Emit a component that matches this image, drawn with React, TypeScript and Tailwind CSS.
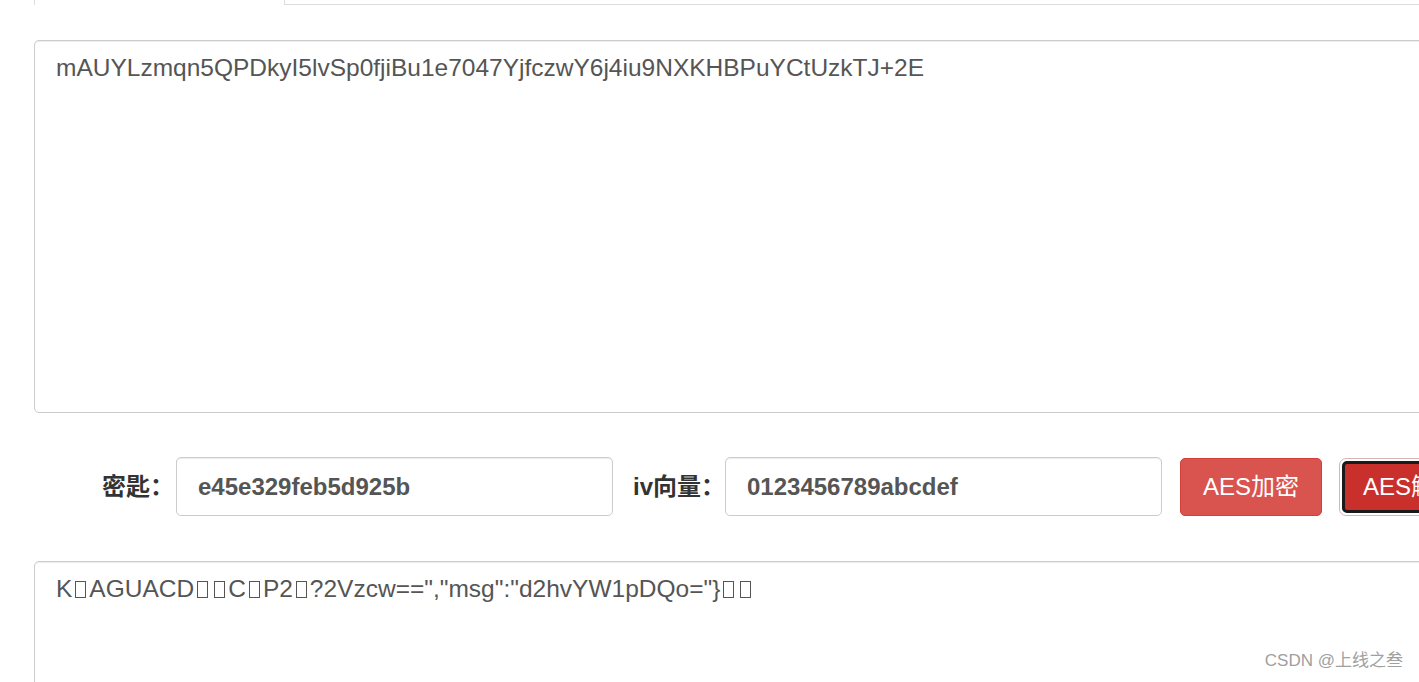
import React from "react";

const font = { fontFamily: '"Liberation Sans", Arial, "Noto Sans CJK SC", sans-serif' };

const cipherText = "mAUYLzmqn5QPDkyI5lvSp0fjiBu1e7047YjfczwY6j4iu9NXKHBPuYCtUzkTJ+2E";

// missing-glyph boxes as they show in the decrypted output
function Tofu() {
  return <span className="inline-block w-[11px] h-[17px] border border-[#555] mx-[3px] align-[-1px]" />;
}

function Field({ label, value, labelWidth }: { label: string; value: string; labelWidth: string }) {
  return (
    <>
      <label className={`${labelWidth} shrink-0 text-right text-[24px] font-bold text-[#333] leading-none`}>{label}</label>
      <div className="w-[437px] shrink-0 h-[59px] border border-[#ccc] rounded-[5px] bg-white shadow-[inset_0_1px_1px_rgba(0,0,0,0.075)] flex items-center pl-[21px] text-[24px] font-bold text-[#555]">
        {value}
      </div>
    </>
  );
}

export default function App() {
  return (
    <div className="relative w-screen h-[682px] overflow-hidden bg-white" style={font}>
      <div className="flex h-[5px]">
        <div className="w-[34px] shrink-0" />
        <div className="w-[251px] shrink-0 border-x border-[#ddd] bg-white" />
        <div className="flex-1 border-b border-[#ddd]" />
      </div>

      <div className="pl-[34px] pt-[35px]">
        <div className="w-[1450px] h-[373px] border border-[#ccc] rounded-[5px] shadow-[inset_0_1px_1px_rgba(0,0,0,0.075)] pt-[10px] px-[21px] text-[24.5px] leading-[1.42857] text-[#555] whitespace-nowrap">
          {cipherText}
        </div>

        <div className="flex items-center h-[59px] mt-[44px] whitespace-nowrap">
          <Field label="密匙：" value="e45e329feb5d925b" labelWidth="w-[142px] pr-[2px]" />
          <div className="w-[19px] shrink-0" />
          <Field label="iv向量：" value="0123456789abcdef" labelWidth="w-[93px] text-left" />
          <button className="ml-[18px] shrink-0 w-[142px] h-[58px] rounded-[5px] bg-[#d9534f] border border-[#d43f3a] text-white text-[24px]">
            AES加密
          </button>
          <div className="ml-[17px] shrink-0 p-[2px] rounded-[7px] border border-[#d9b3b3]">
            <button className="w-[142px] h-[52px] rounded-[5px] bg-[#c9302c] border-[3px] border-[#1a1a1a] text-white text-[24px] text-left pl-[18px]">
              AES解密
            </button>
          </div>
        </div>

        <div className="mt-[45px] w-[1450px] h-[200px] border border-[#ccc] rounded-[5px] shadow-[inset_0_1px_1px_rgba(0,0,0,0.075)] pt-[10px] px-[21px] text-[24.5px] leading-[1.42857] text-[#555] whitespace-nowrap">
          K<Tofu />AGUACD<Tofu /><Tofu />C<Tofu />P2<Tofu />?2Vzcw==","msg":"d2hvYW1pDQo="{"}"}<Tofu /><Tofu />
        </div>
      </div>

      <div className="absolute right-[16px] bottom-[9px] text-[17px] text-[#a0a0a0]">CSDN @上线之叁</div>
    </div>
  );
}
